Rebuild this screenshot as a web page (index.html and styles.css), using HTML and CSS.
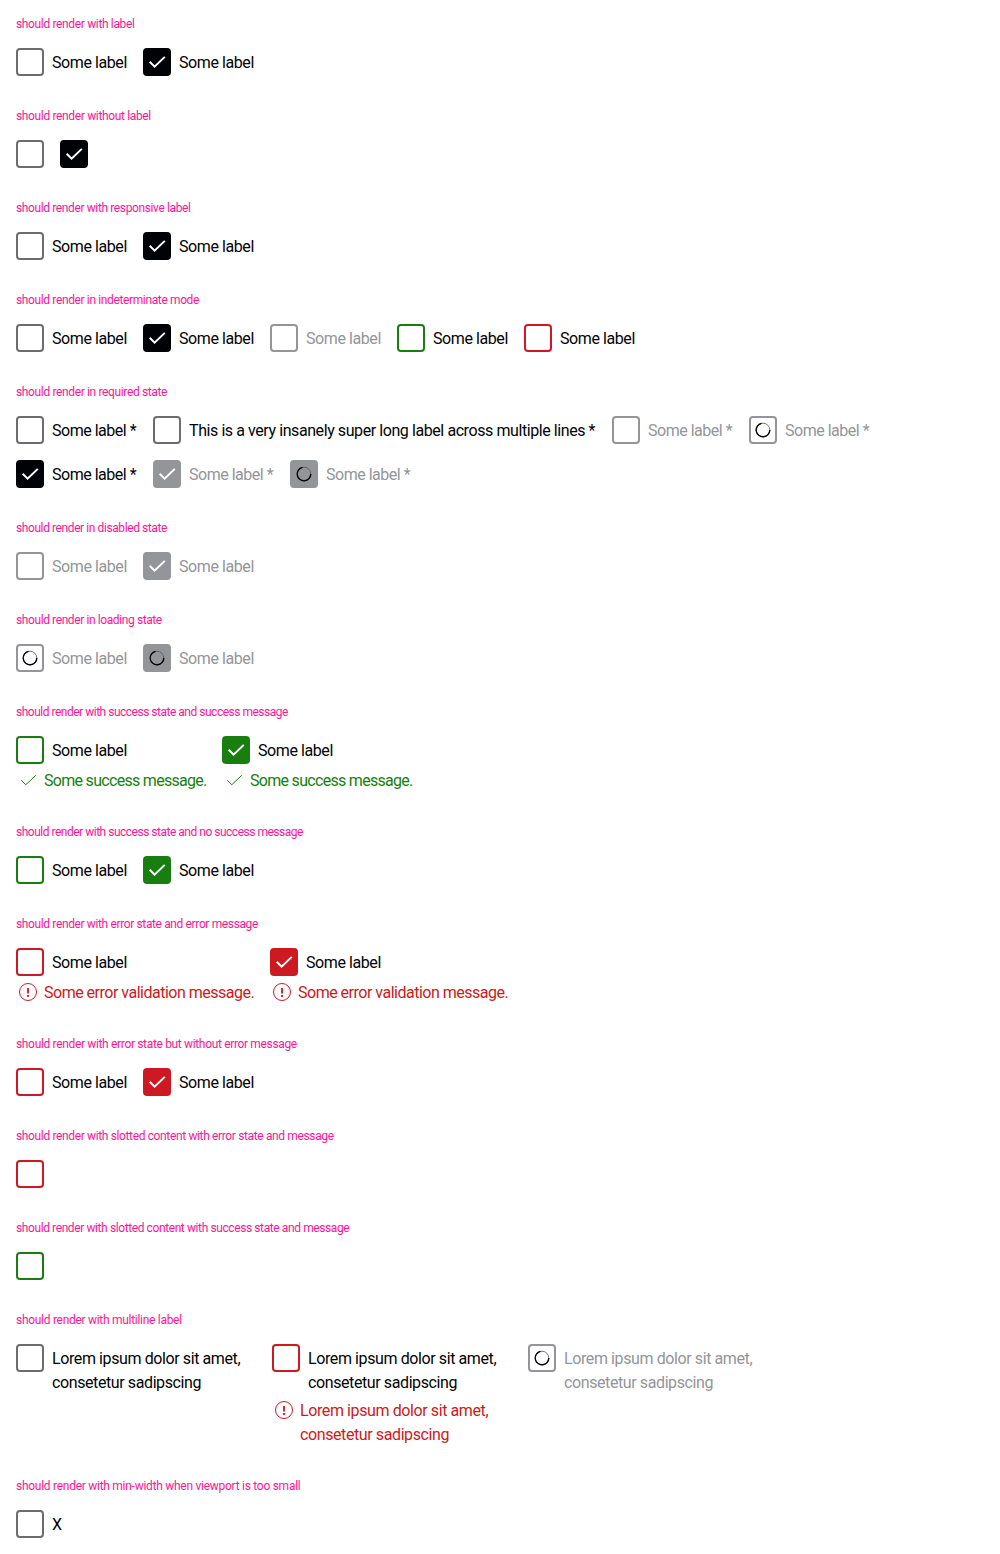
FILE: index.html
```
<!DOCTYPE html>
<html lang="en">
<head>
<meta charset="utf-8">
<title>Checkbox states</title>
<link rel="stylesheet" href="styles.css">
<script src="checkboxes.js" defer></script>
</head>
<body>
<main class="page"></main>
</body>
</html>
```
FILE: checkboxes.js
```
const tick = '<svg class="tick" viewBox="0 0 28 28"><path d="M6.7 13.7 11.6 18.6 21.8 8.9"/></svg>';
const spinner = '<svg class="spinner" viewBox="0 0 28 28"><circle class="track" cx="14" cy="14" r="6.8"/><path d="M20.8 14A6.8 6.8 0 1 1 12.5 7.37"/></svg>';
const success = '<svg class="note-icon" viewBox="0 0 24 24"><path d="M5.2 12.2 9.7 16.8 19.8 7.3"/></svg>';
const error = '<svg class="note-icon" viewBox="0 0 24 24"><circle cx="12" cy="12" r="8.5"/><path class="mark" d="M12 8v5.6M12 15v2"/></svg>';

const L = 'Some label';
const R = 'Some label *';
const lorem = 'Lorem ipsum dolor sit amet, consetetur sadipscing';

// Each group: title, letter spacing of the title in px, items.
// Each item: [modifier classes, label, message]
const groups = [
  ['should render with label', -0.35, [['', L], ['checked', L]]],
  ['should render without label', -0.35, [['', ''], ['checked', '']]],
  ['should render with responsive label', -0.38, [['', L], ['checked', L]]],
  ['should render in indeterminate mode', -0.37, [['', L], ['checked', L], ['disabled', L], ['success', L], ['error', L]]],
  ['should render in required state', -0.36, [
    ['req', R], ['long', 'This is a very insanely super long label across multiple lines *'],
    ['disabled req', R], ['disabled loading req', R],
    ['checked req', R], ['checked disabled req', R], ['checked disabled loading req', R]]],
  ['should render in disabled state', -0.41, [['disabled', L], ['checked disabled', L]]],
  ['should render in loading state', -0.4, [['disabled loading', L], ['checked disabled loading', L]]],
  ['should render with success state and success message', -0.49, [
    ['success', L, 'Some success message.'], ['success checked', L, 'Some success message.']]],
  ['should render with success state and no success message', -0.49, [['success', L], ['success checked', L]]],
  ['should render with error state and error message', -0.37, [
    ['error', L, 'Some error validation message.'], ['error checked', L, 'Some error validation message.']]],
  ['should render with error state but without error message', -0.34, [['error', L], ['error checked', L]]],
  ['should render with slotted content with error state and message', -0.36, [['error', '']]],
  ['should render with slotted content with success state and message', -0.4, [['success', '']]],
  ['should render with multiline label', -0.29, [['multi', lorem], ['multi error', lorem, lorem], ['multi disabled loading', lorem]]],
  ['should render with min-width when viewport is too small', -0.27, [['', 'X']]]
];

function item([mods, label, message]) {
  const has = name => mods.split(' ').includes(name);
  const mark = has('loading') ? spinner : has('checked') ? tick : '';
  const text = label ? `<span class="label">${label}</span>` : '';
  const note = message
    ? `<div class="note">${has('error') ? error : success}<span class="note-text">${message}</span></div>` : '';
  return `<div class="item ${mods}${message ? ' noted' : ''}"><div class="control"><span class="box">${mark}</span>${text}</div>${note}</div>`;
}

document.querySelector('.page').innerHTML = groups.map(([title, spacing, items]) =>
  `<section class="group"><h2 class="title" style="letter-spacing:${spacing}px">${title}</h2><div class="row">${items.map(item).join('')}</div></section>`).join('');
```
FILE: styles.css
```
* { box-sizing: border-box; }
body {
  margin: 0;
  background: #fff;
  color: #010205;
  font: 16px/24px Roboto, "Liberation Sans", sans-serif;
}
.page { display: flex; flex-direction: column; gap: 32px; padding: 16px; }
.group { display: flex; flex-direction: column; gap: 16px; }
.title { margin: 0; font-size: 12px; line-height: 16px; font-weight: 400; color: #ff1493; }
.row { display: flex; flex-wrap: wrap; align-items: flex-start; gap: 16px; }
.item { --line: #6b6d70; --fill: #010205; display: flex; flex-direction: column; gap: 4px; }
.control { display: flex; align-items: flex-start; gap: 8px; }
.box { flex: none; width: 28px; height: 28px; border: 2px solid var(--line); border-radius: 4px; display: flex; }
.label { padding-top: 3px; height: 27px; margin-bottom: -1px; width: 75px; white-space: nowrap; letter-spacing: -0.42px; }
.req .label { width: 85px; letter-spacing: -0.48px; }
.long .label { width: 407px; }
.success { --line: #197e10; --fill: #197e10; }
.error { --line: #cc1922; --fill: #cc1922; }
.disabled { --line: #949598; --fill: #949598; }
.disabled .label { color: #949598; }
.checked .box { background: var(--fill); border-color: var(--fill); }
.tick, .spinner { flex: none; width: 28px; height: 28px; margin: -2px; fill: none; }
.tick { stroke: #fff; stroke-width: 2; }
.spinner { stroke: #010205; stroke-width: 1.4; }
.track { stroke: #535457; stroke-width: 0.8; }
.success.noted { width: 190px; }
.error.noted { width: 238px; }
.note { display: flex; gap: 4px; color: var(--line); }
.note-icon { flex: none; width: 24px; height: 24px; fill: none; stroke: currentColor; stroke-width: 1; }
.mark { stroke-width: 1.8; }
.note-text { padding-top: 1px; margin-bottom: -1px; white-space: nowrap; letter-spacing: -0.7px; }
.error .note-text { letter-spacing: -0.5px; }
.item.multi { width: 240px; }
.multi .label { flex: 1; height: auto; white-space: normal; letter-spacing: -0.4px; }
.multi .note-text { white-space: normal; letter-spacing: -0.4px; }
```
